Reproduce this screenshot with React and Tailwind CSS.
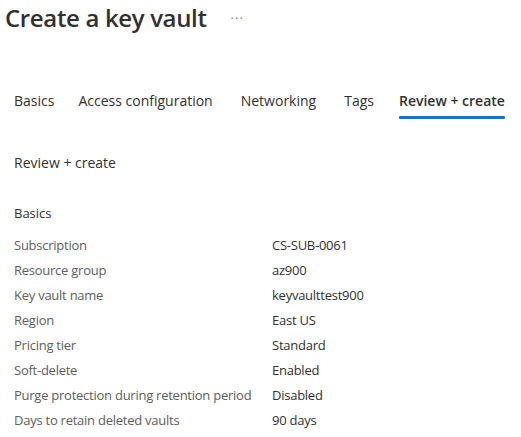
import React from "react";

const rows = [
  ["Subscription", "CS-SUB-0061"],
  ["Resource group", "az900"],
  ["Key vault name", "keyvaulttest900"],
  ["Region", "East US"],
  ["Pricing tier", "Standard"],
  ["Soft-delete", "Enabled"],
  ["Purge protection during retention period", "Disabled"],
  ["Days to retain deleted vaults", "90 days"],
];

const tabs = [
  ["Basics", ""],
  ["Access configuration", "ml-[24px]"],
  ["Networking", "ml-[28px]"],
  ["Tags", "ml-[28px]"],
  ["Review + create", "ml-[25px]"],
];

export default function App() {
  return (
    <div className="w-[521px] h-[437px] bg-white overflow-hidden text-[#323130]" style={{ fontFamily: '"Open Sans", "Noto Sans", sans-serif' }}>
      <div className="flex items-center pl-[5px] h-[36px]">
        <h1 className="text-[24px] font-semibold leading-[36px] tracking-[-0.35px] text-[#323130]">Create a key vault</h1>
        <span className="ml-[24px] text-[13px] text-[#8a8886] leading-none tracking-[1px]">···</span>
      </div>
      <div className="flex pl-[14px] mt-[54px] text-[14px] text-[#323130]">
        {tabs.map(([t, m], i) => (
          <div key={t} className={"relative h-[29px] flex items-start " + m}>
            <span className={i === 4 ? "font-semibold" : ""}>{t}</span>
            {i === 4 && <div className="absolute left-0 right-0 bottom-0 h-[3px] bg-[#0078d4] rounded-[1px]" />}
          </div>
        ))}
      </div>
      <div className="pl-[14px] mt-[34px] text-[14px] leading-[19px]">Review + create</div>
      <div className="pl-[14px] mt-[32px] text-[13px] leading-[19px]">Basics</div>
      <div className="pl-[14px] mt-[10px] text-[13px] tracking-[-0.25px]">
        {rows.map(([k, v]) => (
          <div key={k} className="flex h-[25px] items-center">
            <div className="w-[258px] shrink-0 text-[#605e5c]">{k}</div>
            <div className="text-[#323130]">{v}</div>
          </div>
        ))}
      </div>
    </div>
  );
}
